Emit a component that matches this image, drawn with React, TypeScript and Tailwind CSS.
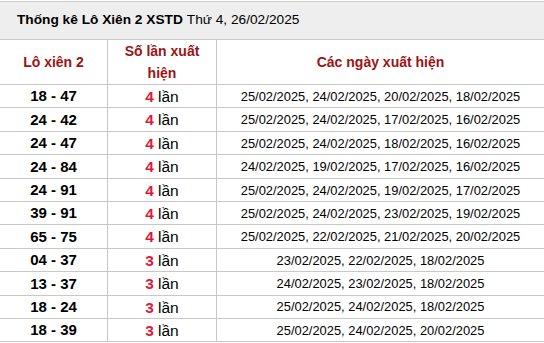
const rows: [string, number, string][] = [
  ["18 - 47", 4, "25/02/2025, 24/02/2025, 20/02/2025, 18/02/2025"],
  ["24 - 42", 4, "25/02/2025, 24/02/2025, 17/02/2025, 16/02/2025"],
  ["24 - 47", 4, "25/02/2025, 24/02/2025, 18/02/2025, 16/02/2025"],
  ["24 - 84", 4, "24/02/2025, 19/02/2025, 17/02/2025, 16/02/2025"],
  ["24 - 91", 4, "25/02/2025, 24/02/2025, 19/02/2025, 17/02/2025"],
  ["39 - 91", 4, "25/02/2025, 24/02/2025, 23/02/2025, 19/02/2025"],
  ["65 - 75", 4, "25/02/2025, 22/02/2025, 21/02/2025, 20/02/2025"],
  ["04 - 37", 3, "23/02/2025, 22/02/2025, 18/02/2025"],
  ["13 - 37", 3, "24/02/2025, 23/02/2025, 18/02/2025"],
  ["18 - 24", 3, "25/02/2025, 24/02/2025, 18/02/2025"],
  ["18 - 39", 3, "25/02/2025, 24/02/2025, 20/02/2025"],
];

export default function App() {
  return (
    <div className="w-[544px] h-[343px] overflow-hidden bg-white font-['Liberation_Sans',Arial,sans-serif] text-black">
      {/* title */}
      <div className="mt-px h-[39px] border-y border-[#c8c8c8] bg-[#efeeef] flex items-center pl-[17px] text-[13.7px]">
        <span className="font-bold">Thống kê Lô Xiên 2 XSTD</span>
        <span className="ml-1">Thứ 4, 26/02/2025</span>
      </div>

      {/* header */}
      <div className="grid grid-cols-[108px_109px_1fr] h-[45px] border-b border-[#c8c8c8] text-[#9c1414] font-bold text-[14px]">
        <div className="flex items-center justify-center border-r border-[#c8c8c8]">Lô xiên 2</div>
        <div className="flex items-center justify-center text-center leading-[22px] px-4 border-r border-[#c8c8c8]">
          Số lần xuất hiện
        </div>
        <div className="flex items-center justify-center">Các ngày xuất hiện</div>
      </div>

      {rows.map(([pair, n, dates]) => (
        <div
          key={pair}
          className="grid grid-cols-[108px_109px_1fr] h-[23.4px] border-b border-[#c8c8c8]"
        >
          <div className="flex items-center justify-center font-bold text-[15px] border-r border-[#c8c8c8]">
            {pair}
          </div>
          <div className="flex items-center justify-center text-[15.5px] border-r border-[#c8c8c8]">
            <span className="font-bold text-[#e3173a]">{n}</span>
            <span className="ml-1">lần</span>
          </div>
          <div className="flex items-center justify-center text-[12.9px]">{dates}</div>
        </div>
      ))}
    </div>
  );
}
